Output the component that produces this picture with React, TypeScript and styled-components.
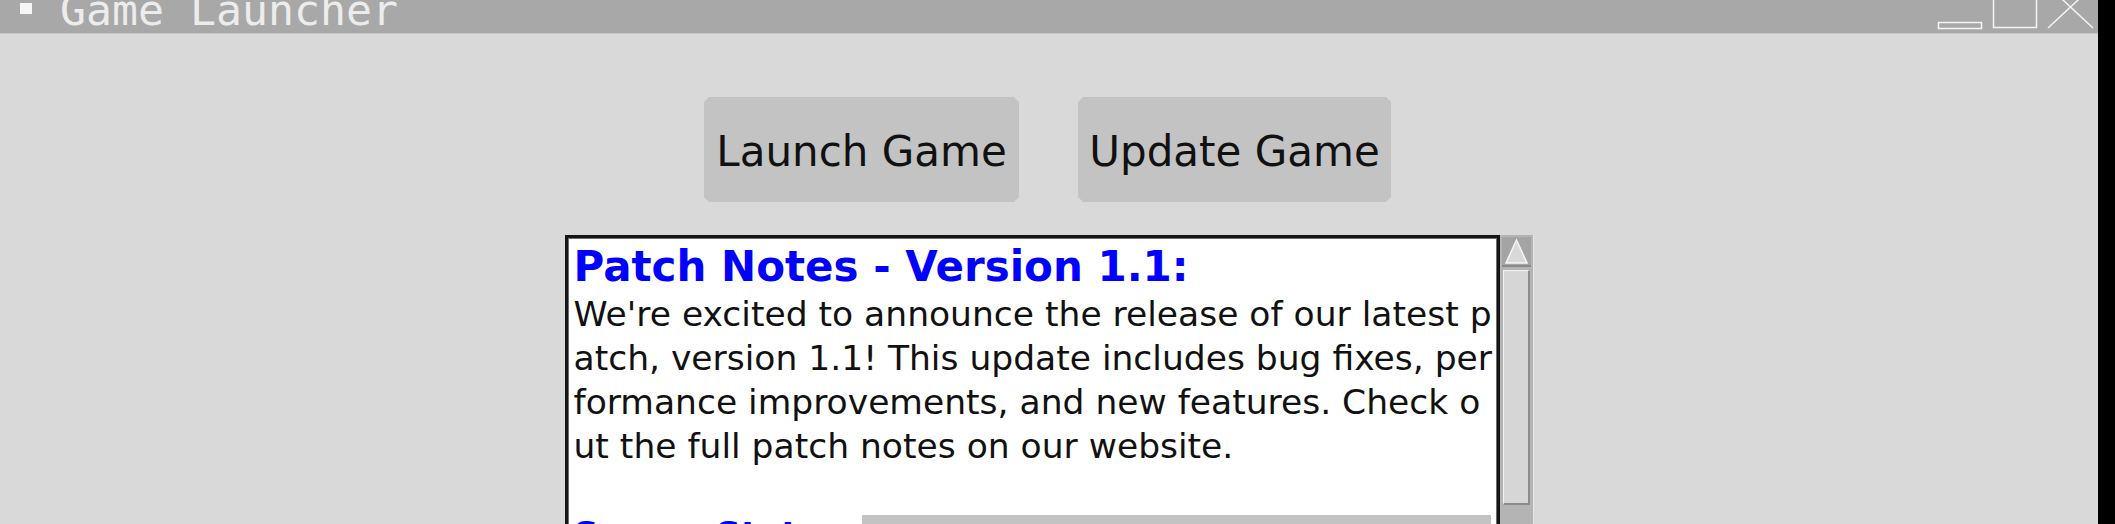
import React from "react";
import styled, { createGlobalStyle } from "styled-components";

const Global = createGlobalStyle`
  html, body { margin: 0; padding: 0; background: #000; }
  body { width: 2115px; height: 524px; overflow: hidden; }
  #root { width: 2115px; height: 524px; }
`;

const Screen = styled.div`
  display: flex;
  width: 2115px;
  height: 524px;
  background: #000;
`;

const Window = styled.div`
  width: 2098px;
  height: 524px;
  display: flex;
  flex-direction: column;
  background: #d9d9d9;
  overflow: hidden;
`;

const TitleBar = styled.div`
  flex: none;
  height: 33px;
  border-bottom: 1px solid #c6c6c6;
  background: #a8a8a8;
  display: flex;
  align-items: flex-start;
  overflow: hidden;
`;

const WinIcon = styled.div`
  flex: none;
  width: 12px;
  height: 11px;
  margin: 3px 0 0 20px;
  background: #f6f6f6;
`;

const TitleText = styled.span`
  margin-left: 28px;
  font-family: "DejaVu Sans Mono", monospace;
  font-size: 43.2px;
  line-height: 20px;
  color: #ececec;
  white-space: pre;
`;

const Controls = styled.svg`
  flex: none;
  margin-left: auto;
  margin-right: 3px;
  overflow: visible;
`;

const Content = styled.div`
  display: flex;
  flex-direction: column;
  align-items: center;
  padding-top: 63px;
`;

const ButtonRow = styled.div`
  display: flex;
  gap: 59px;
  margin-left: -3px;
`;

const Button = styled.button<{ $w: number }>`
  width: ${(p) => p.$w}px;
  height: 105px;
  border: none;
  padding: 0;
  background: #c3c3c3;
  clip-path: polygon(5px 0, calc(100% - 5px) 0, 100% 5px, 100% calc(100% - 5px), calc(100% - 5px) 100%, 5px 100%, 0 calc(100% - 5px), 0 5px);
  font-family: "DejaVu Sans", sans-serif;
  font-size: 42px;
  line-height: 49px;
  color: #111;
  display: flex;
  align-items: center;
  justify-content: center;
  padding-top: 4px;
`;

const NotesRow = styled.div`
  display: flex;
  margin-top: 33px;
  height: 320px;
`;

const TextBox = styled.div`
  box-sizing: border-box;
  width: 935px;
  height: 100%;
  border: 3px solid #151515;
  box-shadow: inset 0 0 0 1px #6e6e6e;
  background: #fff;
  padding: 4px 6px 0 6px;
  font-family: "DejaVu Sans", sans-serif;
  color: #111;
  overflow: hidden;
`;

const Heading = styled.div`
  font-size: 42px;
  font-weight: bold;
  line-height: 50px;
  color: #0000ff;
  white-space: pre;
`;

const BodyLine = styled.div`
  font-size: 34.5px;
  line-height: 44px;
  height: 44px;
  white-space: pre;
`;

const StatusRow = styled.div`
  display: flex;
  align-items: flex-start;
`;

const StatusLabel = styled.span`
  font-size: 35px;
  font-weight: bold;
  line-height: 46px;
  color: #0000ff;
  white-space: pre;
`;

const StatusBar = styled.div`
  flex: none;
  margin-left: auto;
  margin-top: 3px;
  width: 629px;
  height: 42px;
  background: #c3c3c3;
`;

const Scrollbar = styled.div`
  box-sizing: border-box;
  width: 34px;
  height: 100%;
  background: #b4b4b4;
  border-right: 1px solid #e6e6e6;
  padding: 2px 2px 0 2px;
  display: flex;
  flex-direction: column;
  align-items: center;
`;

const ArrowBox = styled.svg`
  flex: none;
  display: block;
`;

const Thumb = styled.div`
  flex: none;
  box-sizing: border-box;
  width: 27px;
  height: 235px;
  margin-top: 3px;
  background: #d6d6d6;
  border-top: 1px solid #f2f2f2;
  border-left: 1px solid #f2f2f2;
  border-right: 2px solid #8c8c8c;
  border-bottom: 2px solid #8c8c8c;
`;

const lines = [
  "We're excited to announce the release of our latest p",
  "atch, version 1.1! This update includes bug fixes, per",
  "formance improvements, and new features. Check o",
  "ut the full patch notes on our website.",
  "",
];

export default function App() {
  return (
    <>
      <Global />
      <Screen>
        <Window>
          <TitleBar>
            <WinIcon />
            <TitleText>Game Launcher</TitleText>
            <Controls width={160} height={33} viewBox="0 0 160 33">
              <rect x={3.5} y={22.5} width={43} height={6} fill="none" stroke="#f4f4f4" strokeWidth={1.5} />
              <rect x={58.5} y={-16} width={43} height={43.5} fill="none" stroke="#f4f4f4" strokeWidth={1.5} />
              <line x1={113} y1={-14} x2={158} y2={28} stroke="#f4f4f4" strokeWidth={1.5} />
              <line x1={158} y1={-14} x2={113} y2={28} stroke="#f4f4f4" strokeWidth={1.5} />
            </Controls>
          </TitleBar>
          <Content>
            <ButtonRow>
              <Button $w={315}>Launch Game</Button>
              <Button $w={313}>Update Game</Button>
            </ButtonRow>
            <NotesRow>
              <TextBox>
                <Heading>Patch Notes - Version 1.1:</Heading>
                {lines.map((l, i) => (
                  <BodyLine key={i}>{l}</BodyLine>
                ))}
                <StatusRow>
                  <StatusLabel>Server Status:</StatusLabel>
                  <StatusBar />
                </StatusRow>
              </TextBox>
              <Scrollbar>
                <ArrowBox width={29} height={30} viewBox="0 0 29 30">
                  <rect x={0} y={0} width={29} height={30} fill="#a4a4a4" />
                  <polygon points="14.5,3 25,26 4,26" fill="#d9d9d9" stroke="#f6f6f6" strokeWidth={1.5} />
                  <line x1={0} y1={29} x2={29} y2={29} stroke="#8a8a8a" strokeWidth={2} />
                </ArrowBox>
                <Thumb />
              </Scrollbar>
            </NotesRow>
          </Content>
        </Window>
      </Screen>
    </>
  );
}
